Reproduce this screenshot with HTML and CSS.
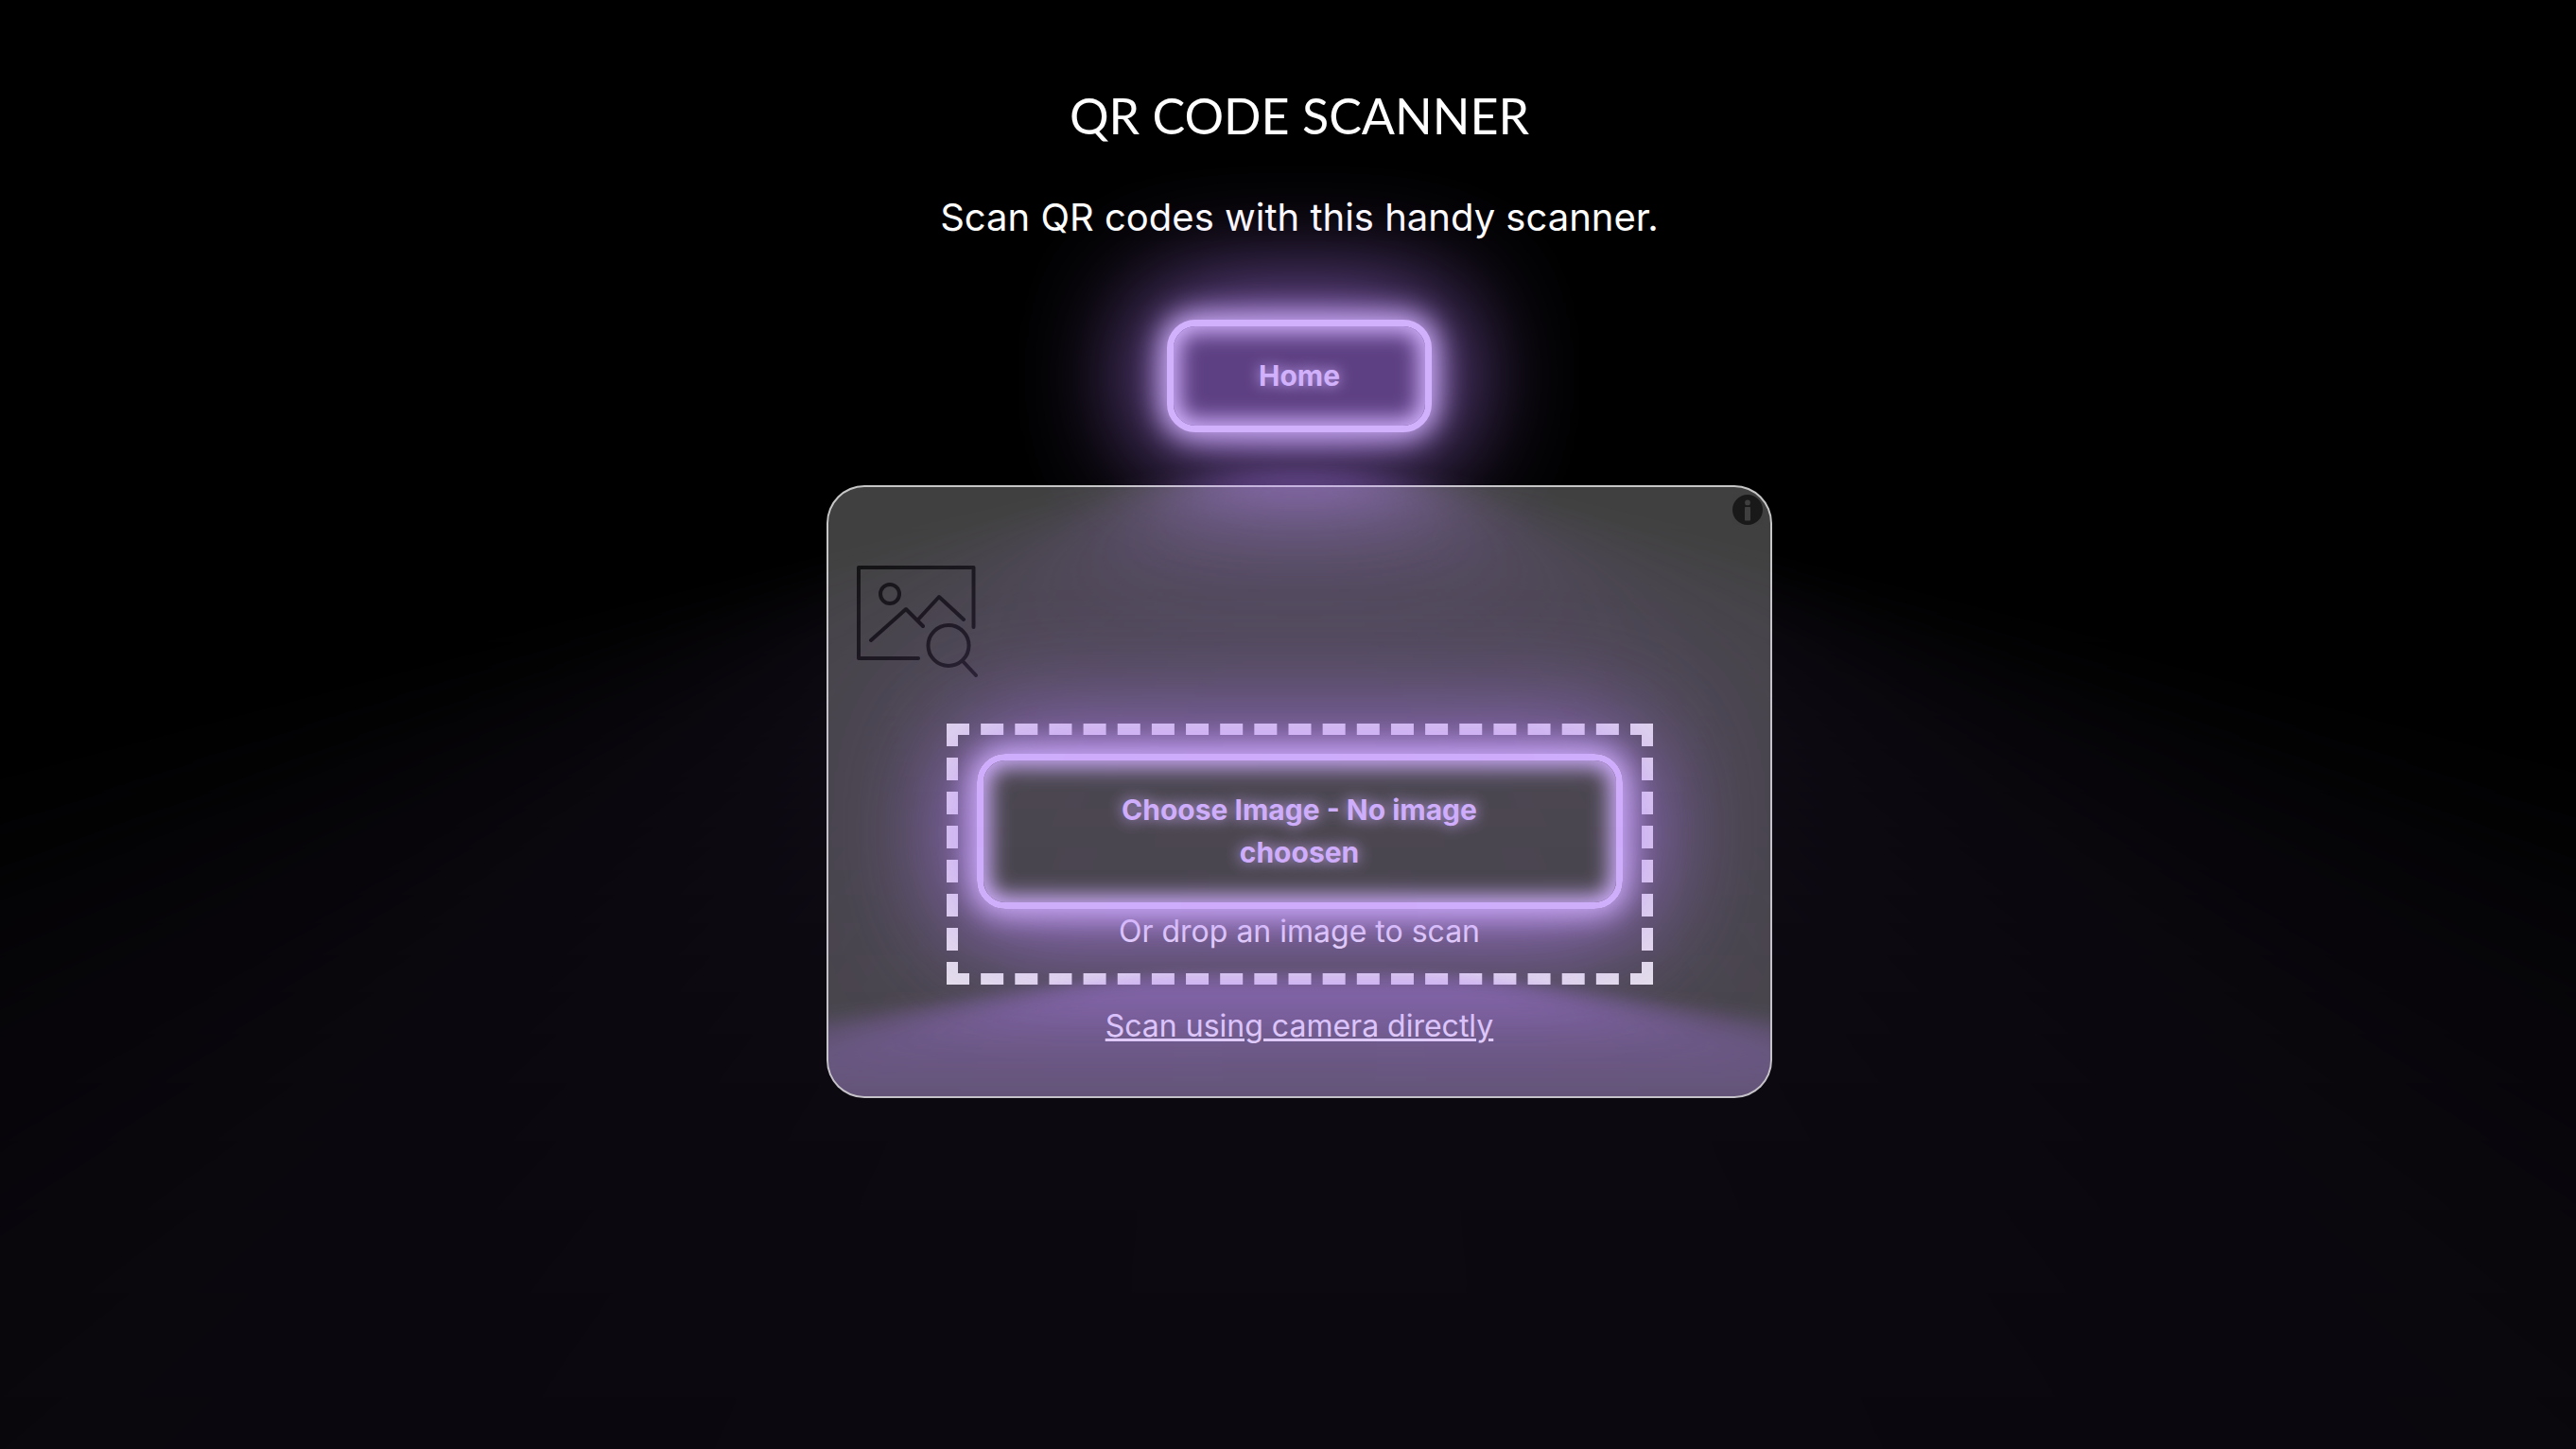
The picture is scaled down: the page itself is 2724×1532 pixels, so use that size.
FILE: index.html
```html
<!DOCTYPE html>
<html lang="en">
<head>
<meta charset="utf-8">
<meta name="viewport" content="width=device-width, initial-scale=1">
<title>QR Code Scanner</title>
<link rel="stylesheet" href="styles.css">
</head>
<body>
<main class="page">
  <h1 class="title">QR CODE SCANNER</h1>
  <p class="subtitle">Scan QR codes with this handy scanner.</p>
  <button class="glow-button home" type="button">Home</button>
  <section class="reader">
    <button class="info" type="button" aria-label="About this scanner">
      <svg viewBox="0 0 32 32" aria-hidden="true"><path fill-rule="evenodd" d="M16 0a16 16 0 1 0 0 32a16 16 0 0 0 0-32zM16 5.5a2.9 2.9 0 1 1 0 5.8a2.9 2.9 0 0 1 0-5.8zM13.8 13h4.400a.8.8 0 0 1 .8.8v12.900a.8.8 0 0 1-.8.8h-4.400a.8.8 0 0 1-.8-.8V13.800a.8.8 0 0 1 .8-.8z"/></svg>
    </button>
    <svg class="picture" viewBox="0 0 128 128" aria-hidden="true">
      <path d="M65 101H2V5H123.500V68M15 82L52 49L70 67M64 61L87 36L113 60M112 104L126 119"/>
      <circle cx="35" cy="33" r="10"/>
      <circle cx="97" cy="87.500" r="21.500"/>
    </svg>
    <div class="drop-zone">
      <button class="glow-button choose" type="button">Choose Image - No image choosen</button>
      <p class="drop-text">Or drop an image to scan</p>
    </div>
    <a class="switch-mode" href="#camera">Scan using camera directly</a>
  </section>
</main>
</body>
</html>
```
FILE: styles.css
```css
* {
  box-sizing: border-box;
}

body {
  margin: 0;
  background: #000;
  color: #fff;
  font-family: Inter, "Liberation Sans", sans-serif;
  font-size: 32px;
  line-height: 48px;
}

.page {
  display: flex;
  flex-direction: column;
  align-items: center;
  min-height: 100vh;
  padding: 86px 0 86px 24px;
  overflow: hidden;
}

.title {
  margin: 0 0 42px;
  font-family: Papyrus, Lato, sans-serif;
  font-size: 52px;
  font-weight: 400;
  line-height: 72px;
}

.subtitle {
  margin: 0 0 78px;
  font-size: 40px;
  line-height: 60px;
}

/* Neon button with a reflection on the floor below it */
.glow-button {
  --glow-color: rgb(209, 177, 252);
  --glow-spread-color: rgba(180, 126, 248, 0.781);
  position: relative;
  padding: 30px 90px;
  border: 7px solid var(--glow-color);
  border-radius: 30px;
  background: rgb(93, 63, 131);
  box-shadow: 0 0 30px 7px var(--glow-color),
    0 0 120px 30px var(--glow-spread-color),
    inset 0 0 22px 7px var(--glow-color);
  color: var(--glow-color);
  font: 700 30px/45px Inter, "Liberation Sans", sans-serif;
  text-shadow: 0 0 15px var(--glow-color);
  cursor: pointer;
}

.glow-button::after {
  content: "";
  position: absolute;
  top: 120%;
  left: 0;
  width: 100%;
  height: 100%;
  background: var(--glow-spread-color);
  filter: blur(60px);
  opacity: 0.7;
  pointer-events: none;
  transform: perspective(45px) rotateX(35deg) scale(1, 0.6);
}

.reader {
  position: relative;
  display: flex;
  flex-direction: column;
  align-items: center;
  width: 100%;
  max-width: 1000px;
  margin-top: 56px;
  padding: 80px 0 50px;
  overflow: hidden;
  border: 2px solid rgba(255, 255, 255, 0.7);
  border-radius: 40px;
  background: rgba(255, 255, 255, 0.25);
}

.info {
  position: absolute;
  top: 8px;
  right: 8px;
  padding: 0;
  border: 0;
  background: none;
  opacity: 0.6;
  cursor: pointer;
}

.info svg {
  display: block;
  width: 32px;
  height: 32px;
}

.picture {
  align-self: flex-start;
  width: 128px;
  height: 128px;
  margin: 0 0 42px 30px;
  fill: none;
  stroke: #000;
  stroke-width: 4;
  stroke-linecap: round;
  stroke-linejoin: round;
  overflow: visible;
  opacity: 0.75;
}

.drop-zone {
  width: 75%;
  padding: 20px;
  border: 12px dashed #ebebeb;
  text-align: center;
}

.choose {
  display: block;
  width: 100%;
  background: transparent;
}

.drop-text {
  margin: 0;
}

.switch-mode {
  margin-top: 20px;
  color: inherit;
  text-decoration-thickness: 3px;
}
```
